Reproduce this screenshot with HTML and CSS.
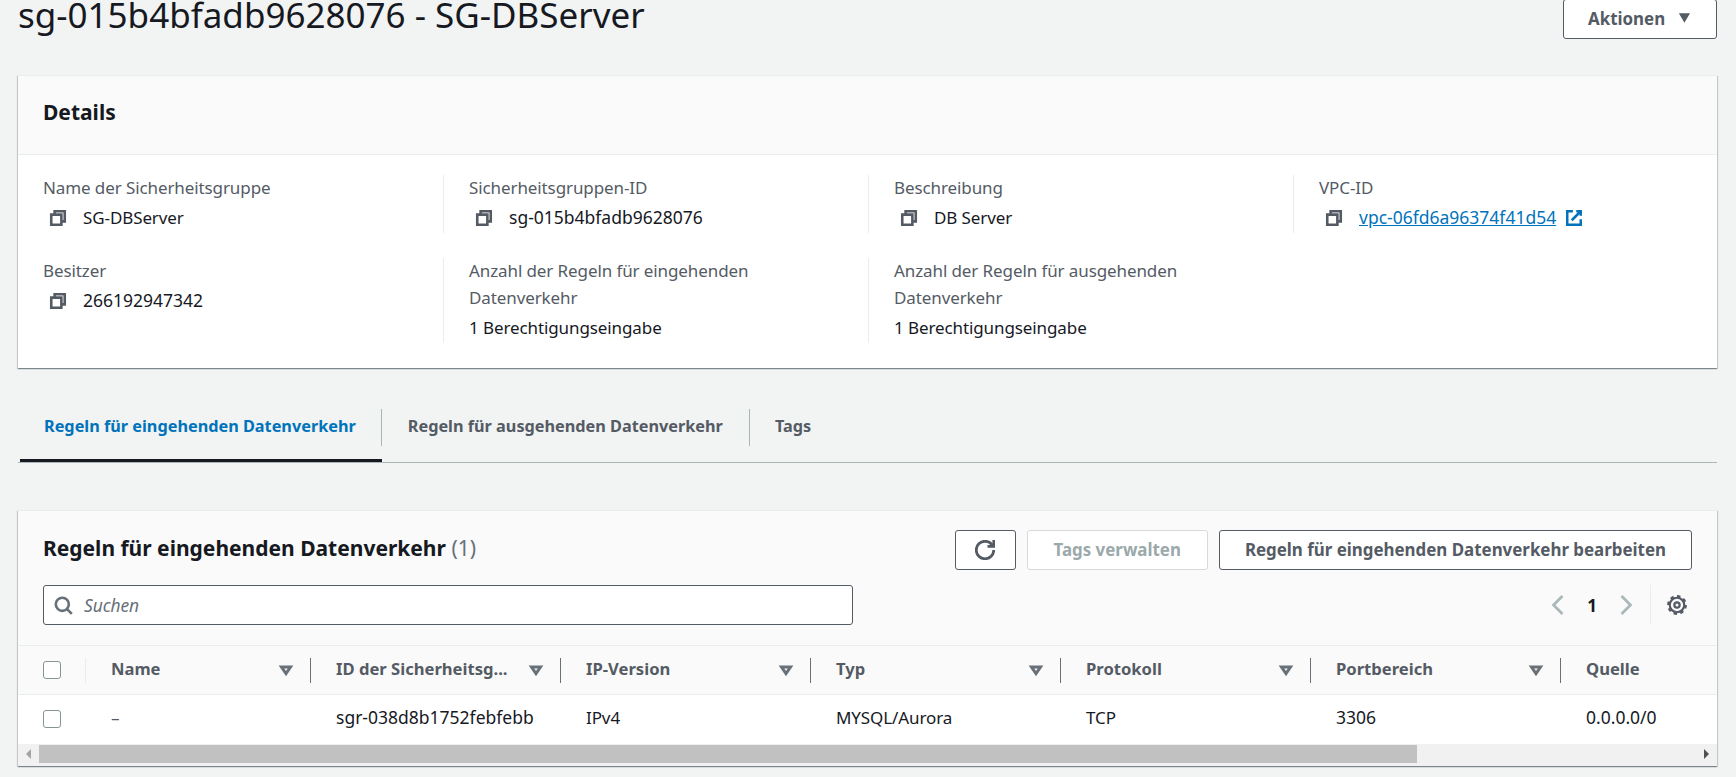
FILE: index.html
```html
<!DOCTYPE html>
<html lang="de">
<head>
    <meta charset="UTF-8">
    <title>sg-015b4bfadb9628076 - SG-DBServer</title>
    <link rel="stylesheet" href="styles.css">
</head>
<body>
    <svg class="icon-defs" width="0" height="0">
        <symbol id="i-copy" viewBox="0 0 16 16"><path d="M2 5h9v9H2z"/><path d="M5 5V2h9v9h-3"/></symbol>
        <symbol id="i-filter" viewBox="0 0 16 16"><path d="M3.5 5h9l-4.5 6.5z"/></symbol>
    </svg>

    <div class="page">
        <div class="page-head">
            <h1>sg-015b4bfadb9628076 - SG-DBServer</h1>
            <button class="btn btn-actions">Aktionen <svg class="caret" viewBox="0 0 16 16"><path d="M2 3h12l-6 10z"/></svg></button>
        </div>

        <!-- Details -->
        <section class="card">
            <div class="card-head"><h2>Details</h2></div>
            <div class="details">
                <div class="cell">
                    <div class="label">Name der Sicherheitsgruppe</div>
                    <div class="value"><svg class="icon"><use href="#i-copy"/></svg>SG-DBServer</div>
                </div>
                <div class="cell">
                    <div class="label">Sicherheitsgruppen-ID</div>
                    <div class="value"><svg class="icon"><use href="#i-copy"/></svg><span class="num">sg-015b4bfadb9628076</span></div>
                </div>
                <div class="cell">
                    <div class="label">Beschreibung</div>
                    <div class="value"><svg class="icon"><use href="#i-copy"/></svg>DB Server</div>
                </div>
                <div class="cell">
                    <div class="label">VPC-ID</div>
                    <div class="value">
                        <svg class="icon"><use href="#i-copy"/></svg>
                        <a class="num" href="#">vpc-06fd6a96374f41d54</a>
                        <svg class="icon-ext" viewBox="0 0 16 16"><path d="M10 2h4v4"/><path d="M6 10l8-8"/><path d="M14 9v5H2V2h5"/></svg>
                    </div>
                </div>
                <div class="cell">
                    <div class="label">Besitzer</div>
                    <div class="value"><svg class="icon"><use href="#i-copy"/></svg><span class="num">266192947342</span></div>
                </div>
                <div class="cell">
                    <div class="label">Anzahl der Regeln für eingehenden Datenverkehr</div>
                    <div class="value">1 Berechtigungseingabe</div>
                </div>
                <div class="cell">
                    <div class="label">Anzahl der Regeln für ausgehenden Datenverkehr</div>
                    <div class="value">1 Berechtigungseingabe</div>
                </div>
            </div>
        </section>

        <!-- Tabs -->
        <div class="tabs">
            <div class="tab active"><span>Regeln für eingehenden Datenverkehr</span></div>
            <div class="tab"><span>Regeln für ausgehenden Datenverkehr</span></div>
            <div class="tab last"><span>Tags</span></div>
        </div>

        <!-- Regeln -->
        <section class="card rules">
            <div class="rules-head">
                <div class="rules-title">
                    <h2>Regeln für eingehenden Datenverkehr <span class="count">(1)</span></h2>
                    <div class="actions">
                        <button class="btn btn-icon">
                            <svg class="icon-refresh" viewBox="0 0 16 16"><path d="M10 5h5V0"/><path d="M15 8a7 7 0 0 1-14 0 7 7 0 0 1 7-7 6.9 6.9 0 0 1 6.25 4.13"/></svg>
                        </button>
                        <button class="btn btn-disabled">Tags verwalten</button>
                        <button class="btn">Regeln für eingehenden Datenverkehr bearbeiten</button>
                    </div>
                </div>
                <div class="rules-tools">
                    <div class="search">
                        <svg class="icon-search" viewBox="0 0 16 16"><circle cx="7" cy="7" r="5.5"/><path d="M11 11l4 4"/></svg>
                        <span>Suchen</span>
                    </div>
                    <div class="pager">
                        <svg class="chev" viewBox="0 0 16 16"><path d="M11 2L5 8l6 6"/></svg>
                        <span class="page-no">1</span>
                        <svg class="chev" viewBox="0 0 16 16"><path d="M5 2l6 6-6 6"/></svg>
                        <div class="pager-sep">
                            <svg class="gear" viewBox="0 0 20 20">
                                <circle cx="10" cy="10" r="2.4"/>
                                <circle cx="10" cy="10" r="6.6"/>
                                <circle class="teeth" cx="10" cy="10" r="8" pathLength="48"/>
                            </svg>
                        </div>
                    </div>
                </div>
            </div>

            <div class="table-wrap">
                <table>
                    <colgroup>
                        <col class="col-check"><col class="col-name"><col class="col-std"><col class="col-std">
                        <col class="col-std"><col class="col-std"><col class="col-std"><col class="col-std">
                    </colgroup>
                    <thead>
                        <tr>
                            <th><div class="th-check"><span class="checkbox"></span></div></th>
                            <th><div class="th"><span>Name</span><svg class="icon-filter"><use href="#i-filter"/></svg></div></th>
                            <th><div class="th"><span>ID der Sicherheitsg...</span><svg class="icon-filter"><use href="#i-filter"/></svg></div></th>
                            <th><div class="th"><span>IP-Version</span><svg class="icon-filter"><use href="#i-filter"/></svg></div></th>
                            <th><div class="th"><span>Typ</span><svg class="icon-filter"><use href="#i-filter"/></svg></div></th>
                            <th><div class="th"><span>Protokoll</span><svg class="icon-filter"><use href="#i-filter"/></svg></div></th>
                            <th><div class="th"><span>Portbereich</span><svg class="icon-filter"><use href="#i-filter"/></svg></div></th>
                            <th><div class="th th-last"><span>Quelle</span></div></th>
                        </tr>
                    </thead>
                    <tbody>
                        <tr>
                            <td class="td-check"><span class="checkbox"></span></td>
                            <td class="muted">–</td>
                            <td class="num">sgr-038d8b1752febfebb</td>
                            <td>IPv4</td>
                            <td>MYSQL/Aurora</td>
                            <td>TCP</td>
                            <td class="num">3306</td>
                            <td class="num">0.0.0.0/0</td>
                        </tr>
                    </tbody>
                </table>
            </div>

            <div class="scrollbar">
                <span class="arrow arrow-left"></span>
                <span class="thumb"></span>
                <span class="arrow arrow-right"></span>
            </div>
        </section>
    </div>
</body>
</html>
```

FILE: styles.css
```css
* {
    box-sizing: border-box;
}
html, body {
    height: 777px;
    overflow: hidden;
}
body {
    margin: 0;
    background-color: #f2f3f3;
    color: #16191f;
    font-family: "Noto Sans", sans-serif;
    font-size: 17px;
    letter-spacing: -0.1px;
    line-height: 27px;
}
h1, h2 {
    margin: 0;
}
.icon-defs {
    position: absolute;
}
.page {
    width: 1699px;
    margin-left: 18px;
}
.num {
    font-size: 17.5px;
    letter-spacing: 0;
}

/* kopf */
.page-head {
    display: flex;
    justify-content: space-between;
    height: 39px;
}
h1 {
    font-size: 35px;
    font-weight: 400;
    letter-spacing: 0;
    line-height: 29px;
}
.btn {
    height: 40px;
    padding: 0 25px 2px;
    background-color: #fff;
    border: 1px solid #545b64;
    border-radius: 3px;
    color: #545b64;
    font-family: inherit;
    font-size: 16.9px;
    font-weight: 700;
    letter-spacing: 0;
    white-space: nowrap;
}
.btn-actions {
    display: flex;
    align-items: center;
    gap: 12px;
    width: 154px;
    margin-top: -1px;
    padding: 0 24px 2px;
}
.caret {
    width: 16px;
    height: 16px;
    fill: #545b64;
}

/* cards */
.card {
    margin-top: 36px;
    background-color: #fff;
    border-top: 1px solid #eaeded;
    box-shadow: 0 1px 1px 0 rgba(0,28,36,.3), 1px 1px 1px 0 rgba(0,28,36,.15), -1px 1px 1px 0 rgba(0,28,36,.15);
}
.card-head {
    height: 79px;
    padding: 23px 25px 0;
    background-color: #fafafa;
    border-bottom: 1px solid #eaeded;
}
h2 {
    font-size: 21px;
    font-weight: 700;
    letter-spacing: 0;
    line-height: 27px;
}
.details {
    display: grid;
    grid-template-columns: repeat(4, 425px);
    row-gap: 25px;
    padding: 20px 0 25px;
}
.cell {
    padding: 0 30px 0 25px;
    border-left: 1px solid #eaeded;
}
.cell:nth-child(4n+1) {
    padding-left: 25px;
    border-left: 0;
}
.label {
    margin-top: -1px;
    color: #545b64;
}
.value {
    display: flex;
    align-items: center;
    height: 32px;
    padding-top: 1px;
}
.icon {
    width: 18px;
    height: 18px;
    margin: 0 16px 0 6px;
    fill: none;
    stroke: #545b64;
    stroke-width: 2.3;
}
.value a {
    color: #0073bb;
}
.icon-ext {
    width: 18px;
    height: 18px;
    margin-left: 9px;
    fill: none;
    stroke: #0073bb;
    stroke-width: 2.2;
}

/* tabs */
.tabs {
    display: flex;
    margin-top: 31px;
    padding-left: 2px;
    height: 64px;
    border-bottom: 1px solid #aab7b8;
}
.tab {
    height: 63px;
    padding-top: 10px;
    border-bottom: 3px solid transparent;
    color: #545b64;
    font-size: 16.25px;
    font-weight: 700;
    letter-spacing: 0;
}
.tab span {
    display: block;
    height: 37px;
    padding: 0 26px;
    border-right: 1px solid #aab7b8;
    line-height: 34px;
}
.tab.last span {
    padding: 0 25px;
    border-right: 0;
}
.tab.active span {
    padding: 0 25px 0 24px;
}
.tab.active {
    border-bottom-color: #16191f;
    color: #0073bb;
}

/* regeln */
.rules {
    margin-top: 47px;
}
.rules-head {
    height: 134px;
    padding: 19px 25px 0;
    background-color: #fafafa;
}
.rules-title,
.rules-tools {
    display: flex;
    justify-content: space-between;
}
.rules-title {
    align-items: center;
}
.rules-title h2 {
    padding-bottom: 3px;
}
.count {
    color: #687078;
    font-weight: 400;
}
.actions {
    display: flex;
    gap: 11px;
}
.btn-icon {
    display: flex;
    align-items: center;
    justify-content: center;
    width: 61px;
    padding: 0;
}
.icon-refresh {
    width: 20px;
    height: 20px;
    fill: none;
    stroke: #545b64;
    stroke-width: 2.2;
}
.btn-disabled {
    padding: 0 26px 2px;
    border-color: #d5dbdb;
    color: #9aa9aa;
}
.rules-tools {
    margin-top: 15px;
}
.search {
    display: flex;
    align-items: center;
    width: 810px;
    height: 40px;
    padding-left: 10px;
    background-color: #fff;
    border: 1px solid #545b64;
    border-radius: 3px;
    color: #687078;
    font-size: 17.4px;
    font-style: italic;
}
.icon-search {
    width: 19px;
    height: 19px;
    margin-right: 11px;
    fill: none;
    stroke: #687078;
    stroke-width: 2.2;
}
.pager {
    display: flex;
    align-items: center;
    height: 40px;
}
.chev {
    width: 24px;
    height: 24px;
    fill: none;
    stroke: #aab7b8;
    stroke-width: 1.8;
}
.page-no {
    width: 44px;
    font-weight: 700;
    text-align: center;
}
.pager-sep {
    display: flex;
    align-items: center;
    height: 40px;
    margin-left: 12px;
    padding: 0 4px 0 15px;
    border-left: 1px solid #eaeded;
}
.gear {
    width: 22px;
    height: 22px;
    fill: none;
    stroke: #545b64;
    stroke-width: 2;
}
.gear .teeth {
    stroke-width: 2;
    stroke-dasharray: 3 3;
}

/* tabelle */
.table-wrap {
    overflow: hidden;
}
table {
    width: 1793px;
    table-layout: fixed;
    border-collapse: collapse;
}
.col-check {
    width: 68px;
}
.col-name {
    width: 225px;
}
.col-std {
    width: 250px;
}
th {
    height: 49px;
    padding: 0;
    background-color: #fafafa;
    border-top: 1px solid #eaeded;
    border-bottom: 1px solid #eaeded;
    color: #545b64;
    font-size: 16.6px;
    letter-spacing: 0;
    text-align: left;
}
.th,
.th-check {
    display: flex;
    align-items: center;
    height: 25px;
}
.th {
    justify-content: space-between;
    padding: 0 16px 0 25px;
    border-right: 1px solid #687078;
}
.th span {
    margin-bottom: 3px;
}
.th-last {
    border-right: 0;
}
.th-check {
    padding-left: 25px;
    border-right: 1px solid #eaeded;
}
.icon-filter {
    width: 16px;
    height: 16px;
    fill: none;
    stroke: #687078;
    stroke-width: 3;
}
td {
    height: 49px;
    padding: 0 0 4px 25px;
    background-color: #fff;
}
.td-check {
    padding-bottom: 0;
    line-height: 0;
}
.muted {
    color: #545b64;
}
.checkbox {
    display: inline-block;
    width: 18px;
    height: 18px;
    background-color: #fff;
    border: 1.5px solid #879596;
    border-radius: 3px;
}

/* scrollbar */
.scrollbar {
    display: flex;
    align-items: center;
    height: 22px;
    padding: 0 8px 1px 8px;
    background-color: #f1f1f1;
}
.thumb {
    width: 1378px;
    height: 18px;
    margin: 0 287px 0 8px;
    background-color: #c1c1c1;
}
.arrow {
    width: 0;
    height: 0;
    border-top: 5px solid transparent;
    border-bottom: 5px solid transparent;
}
.arrow-left {
    border-right: 5px solid #a3a3a3;
}
.arrow-right {
    border-left: 5px solid #505050;
}
```
